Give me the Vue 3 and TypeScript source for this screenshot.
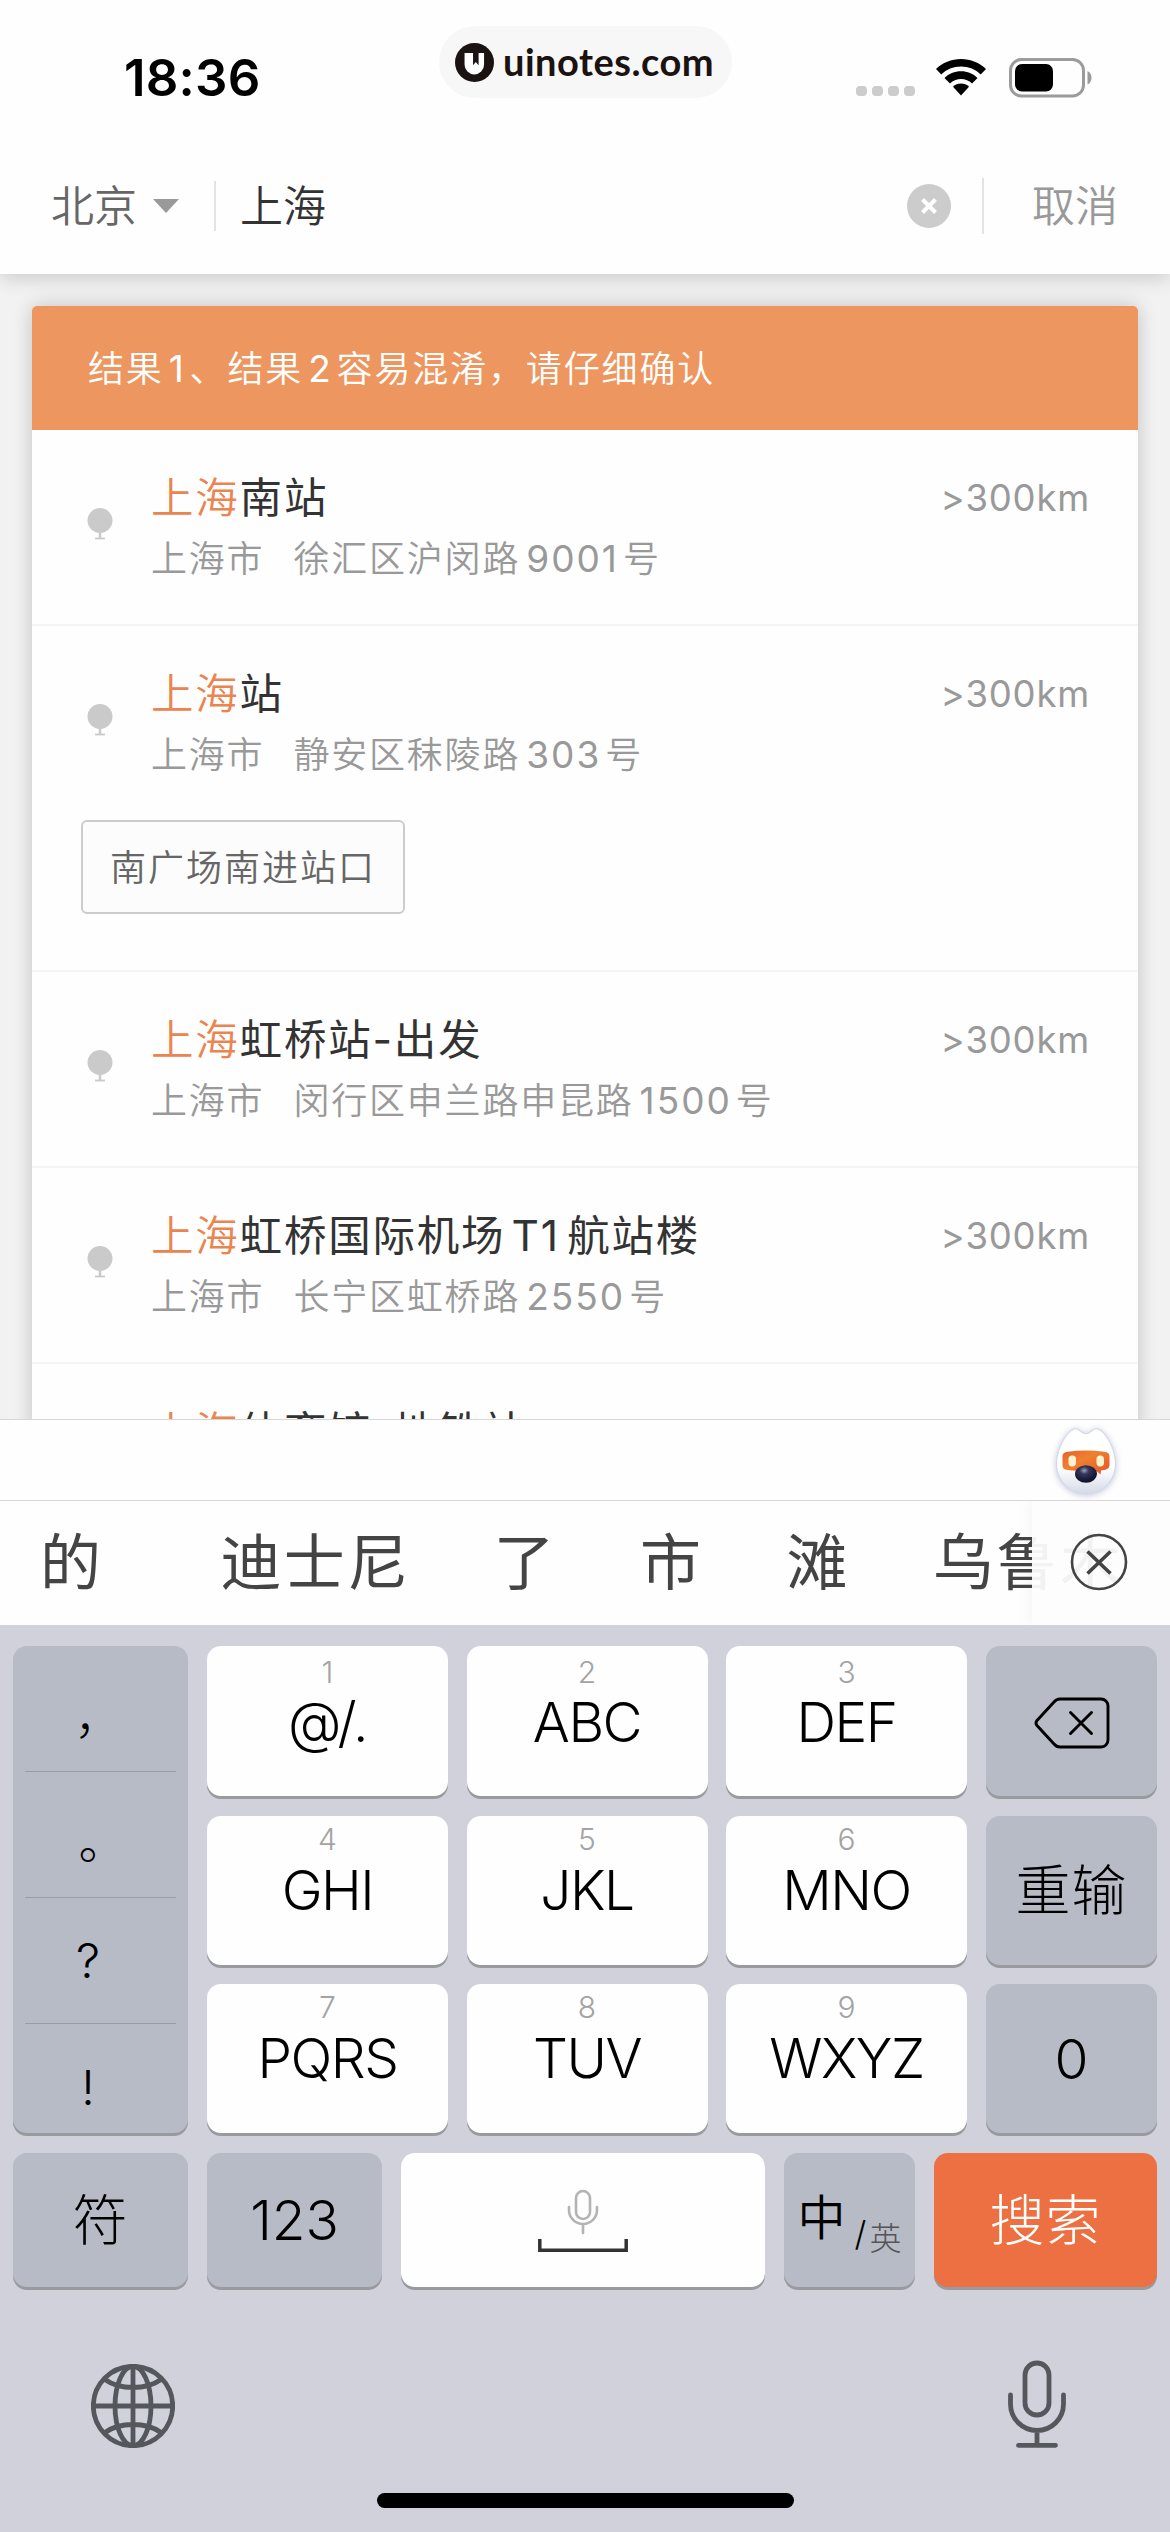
<script setup lang="ts">
interface Place {
  match: string
  rest: string
  city?: string
  address?: string
  distance?: string
  tag?: string
}

interface LetterKey {
  digit: string
  label: string
}

const places: Place[] = [
  { match: '上海', rest: '南站', city: '上海市', address: '徐汇区沪闵路9001号', distance: '>300km' },
  { match: '上海', rest: '站', city: '上海市', address: '静安区秣陵路303号', distance: '>300km', tag: '南广场南进站口' },
  { match: '上海', rest: '虹桥站-出发', city: '上海市', address: '闵行区申兰路申昆路1500号', distance: '>300km' },
  { match: '上海', rest: '虹桥国际机场T1航站楼', city: '上海市', address: '长宁区虹桥路2550号', distance: '>300km' },
  { match: '上海', rest: '体育馆-地铁站' },
]

const punctuation: string[] = ['，', '。', '?', '!']

const letterRows: LetterKey[][] = [
  [{ digit: '1', label: '@/.' }, { digit: '2', label: 'ABC' }, { digit: '3', label: 'DEF' }],
  [{ digit: '4', label: 'GHI' }, { digit: '5', label: 'JKL' }, { digit: '6', label: 'MNO' }],
  [{ digit: '7', label: 'PQRS' }, { digit: '8', label: 'TUV' }, { digit: '9', label: 'WXYZ' }],
]

const candidates: string[] = ['的', '迪士尼', '了', '市', '滩', '乌鲁木']

// Splits an address so that digit runs can carry their own side spacing.
const splitDigits = (text: string): string[] => text.split(/([A-Z]?\d+)/).filter(Boolean)
const isLatin = (part: string): boolean => /^[A-Z]?\d/.test(part)
</script>

<template>
  <div class="screen">
    <header class="top">
      <div class="status">
        <span class="time">18:36</span>
        <div class="brand">
          <svg class="brand-logo" viewBox="0 0 40 40">
            <circle cx="20" cy="20" r="20" fill="#1a1311" />
            <path d="M9.800 10.300h8.700v12.400l2.800-3.200 2.900 3.200V10.300h5.600v11.900a10 10 0 0 1-20 0z" fill="#fff" />
          </svg>
          <span class="brand-name">uinotes.com</span>
        </div>
        <div class="indicators">
          <div class="dots"><i v-for="n in 4" :key="n"></i></div>
          <svg class="wifi" viewBox="0 0 50 37">
            <path d="M25 0C34.700 0 43.500 3.800 50 10l-5.300 5.400C39.600 10.500 32.700 7.500 25 7.500S10.400 10.500 5.300 15.400L0 10C6.500 3.800 15.300 0 25 0z" />
            <path d="M25 12.300c6.400 0 12.200 2.500 16.500 6.600l-5.500 5.500C33.100 21.600 29.200 19.900 25 19.900s-8.100 1.700-11 4.500l-5.500-5.500C12.800 14.800 18.600 12.300 25 12.300z" />
            <path d="M25 24.500c3.100 0 5.900 1.200 8 3.200L25 36.500l-8-8.800c2.100-2 4.900-3.200 8-3.200z" />
          </svg>
          <svg class="battery" viewBox="0 0 84 40">
            <rect x="1.500" y="1.500" width="73" height="36.500" rx="11" fill="none" stroke="#9b9b9b" stroke-width="3" />
            <rect x="6" y="6" width="38" height="27.500" rx="7" />
            <path d="M78.500 13c2.600 1.200 4 3.800 4 6.800s-1.400 5.600-4 6.800z" fill="#9b9b9b" />
          </svg>
        </div>
      </div>
      <div class="search">
        <span class="city">北京</span>
        <svg class="caret" viewBox="0 0 26 14"><path d="M0 0h26L13 14z" fill="#999" /></svg>
        <i class="rule"></i>
        <span class="query">上海</span>
        <svg class="clear" viewBox="0 0 44 44">
          <circle cx="22" cy="22" r="22" fill="#ccc" />
          <path d="M15.500 15.500l13 13M28.500 15.500l-13 13" stroke="#fff" stroke-width="4" />
        </svg>
        <i class="rule tall"></i>
        <span class="cancel">取消</span>
      </div>
    </header>

    <main class="results">
      <div class="card">
        <p class="banner">结果<b>1</b>、结果<b>2</b>容易混淆，请仔细确认</p>
        <article v-for="(place, i) in places" :key="i" class="place">
          <div class="place-row">
            <svg class="pin" viewBox="0 0 26 32">
              <circle cx="13" cy="12.500" r="12.500" fill="#cacaca" />
              <path d="M13 24v6" stroke="#cacaca" stroke-width="2.500" />
              <path d="M8 30.500h10" stroke="#cacaca" stroke-width="1.800" />
            </svg>
            <div class="place-text">
              <h2>
                <em>{{ place.match }}</em><template v-for="(part, j) in splitDigits(place.rest)" :key="j"><span :class="{ latin: isLatin(part) }">{{ part }}</span></template>
              </h2>
              <div v-if="place.address" class="address">
                <span class="region">{{ place.city }}</span>
                <span><template v-for="(part, j) in splitDigits(place.address)" :key="j"><span :class="{ latin: isLatin(part) }">{{ part }}</span></template></span>
              </div>
            </div>
            <span v-if="place.distance" class="distance">{{ place.distance }}</span>
          </div>
          <div v-if="place.tag" class="tag">{{ place.tag }}</div>
        </article>
      </div>
    </main>

    <div class="accessory">
      <svg class="mascot" viewBox="0 0 72 78">
        <defs>
          <linearGradient id="face" x1="0" y1="0" x2="0" y2="1">
            <stop offset="0.600" stop-color="#fff" />
            <stop offset="1" stop-color="#d3d9e8" />
          </linearGradient>
          <linearGradient id="visor" x1="0" y1="0" x2="1" y2="1">
            <stop offset="0" stop-color="#e2622b" />
            <stop offset="0.400" stop-color="#f08030" />
            <stop offset="1" stop-color="#e2552a" />
          </linearGradient>
          <radialGradient id="nose" cx="0.420" cy="0.300" r="0.600">
            <stop offset="0" stop-color="#9ba0b8" />
            <stop offset="0.350" stop-color="#33365a" />
            <stop offset="1" stop-color="#15152f" />
          </radialGradient>
        </defs>
        <path class="mascot-face" d="M24 6c2.500-1 4.300.1 6.300 2.100 3.600 3.200 7.800 3.200 11.400 0C43.700 6.100 45.500 5 48 6c8 3.200 17.500 20 17.500 35C65.500 58 52.500 71 36 71S6.500 58 6.500 41C6.500 26 16 9.200 24 6z" fill="url(#face)" stroke="#d5d8e8" stroke-width="1.200" />
        <path d="M18 28.800c12-1.600 24-1.600 36 0 4 .6 5.500 2 5.500 5v8c0 3-1.500 4.500-5.500 5.200l-3 .5-.5 4-4-3.500c-7 .6-18 .4-28.500-.9-4-.6-5.500-2-5.500-5v-8.300c0-3 1.500-4.500 5.500-5z" fill="url(#visor)" />
        <rect x="18.500" y="32.500" width="7.500" height="11" rx="3.700" fill="#fff3cf" />
        <rect x="46.500" y="32.500" width="7.500" height="11" rx="3.700" fill="#fff3cf" />
        <ellipse cx="36" cy="51" rx="11" ry="8.700" fill="url(#nose)" />
      </svg>
    </div>

    <div class="candidates">
      <span v-for="word in candidates" :key="word" class="word">{{ word }}</span>
      <div class="dismiss">
        <svg viewBox="0 0 58 58">
          <circle cx="29" cy="29" r="27" />
          <path d="M17.500 18.500l23 22M40.500 18.500l-23 22" stroke-width="3.600" />
        </svg>
      </div>
    </div>

    <section class="keyboard">
      <div class="pad">
        <div class="key gray marks">
          <span v-for="mark in punctuation" :key="mark" class="mark">{{ mark }}</span>
        </div>
        <div class="letters">
          <template v-for="(row, r) in letterRows" :key="r">
            <div v-for="item in row" :key="item.digit" class="key letter" :class="{ first: r === 0 }">
              <small>{{ item.digit }}</small>
              <span>{{ item.label }}</span>
            </div>
          </template>
        </div>
        <div class="actions">
          <div class="key gray">
            <svg class="backspace" viewBox="0 0 76 52">
              <path d="M26 2h41a7 7 0 0 1 7 7v34a7 7 0 0 1-7 7H26q-3.500 0-6-3L3 28.500q-2-2.500 0-5L20 5q2.500-3 6-3z" />
              <path d="M36.500 15.500l21 21M57.500 15.500l-21 21" />
            </svg>
          </div>
          <div class="key gray han">重输</div>
          <div class="key gray">0</div>
        </div>
      </div>
      <div class="bottom">
        <div class="key gray han w-side">符</div>
        <div class="key gray w-side">123</div>
        <div class="key space">
          <svg viewBox="0 0 90 64">
            <rect x="38" y="2" width="14" height="28" rx="7" fill="none" stroke="#b3b3b3" stroke-width="2.600" />
            <path d="M31 18v3a14 14 0 0 0 28 0v-3M45 35v9" fill="none" stroke="#b3b3b3" stroke-width="2.600" stroke-linecap="round" />
            <path d="M1.800 50v11.200h86.400V50" fill="none" stroke="#333" stroke-width="3.500" />
          </svg>
        </div>
        <div class="key gray lang"><span class="zh">中</span><span class="slash">/</span><span class="en">英</span></div>
        <div class="key go han">搜索</div>
      </div>
      <div class="system">
        <svg class="globe" viewBox="0 0 84 84">
          <circle cx="42" cy="42" r="39.700" />
          <ellipse cx="42" cy="42" rx="18" ry="39.700" />
          <path d="M42 2v80M2 42h80M14 15.500Q25 23.500 42 23.500T70 15.500M14 68.500Q25 60.500 42 60.500T70 68.500" />
        </svg>
        <svg class="mic" viewBox="0 0 58 88">
          <rect x="17" y="3" width="24" height="52" rx="12" />
          <path d="M2.500 35v9a26.500 26.500 0 0 0 53 0v-9M29 71v14M10.500 85.300h37" />
        </svg>
      </div>
      <i class="home"></i>
    </section>
  </div>
</template>

<style>
body {
  margin: 0;
}
</style>

<style scoped>
.screen {
  width: 1170px;
  height: 2532px;
  display: flex;
  flex-direction: column;
  overflow: hidden;
  background: #f2f2f2;
  font-family: Inter, "Noto Sans CJK SC", sans-serif;
  font-weight: 350;
}

svg {
  display: block;
  flex: none;
}

.top {
  height: 274px;
  flex: none;
  position: relative;
  z-index: 2;
  background: #fefefe;
  box-shadow: 0 2px 20px rgba(0, 0, 0, 0.2);
}

.status {
  height: 138px;
  display: flex;
  align-items: flex-start;
}

.time {
  width: 439px;
  flex: none;
  padding: 47px 0 0 124px;
  font-size: 51px;
  line-height: 62px;
  font-weight: 600;
  letter-spacing: 0.200px;
  box-sizing: border-box;
}

.brand {
  width: 293px;
  height: 72px;
  flex: none;
  margin-top: 26px;
  padding-left: 16px;
  box-sizing: border-box;
  display: flex;
  align-items: center;
  gap: 9px;
  border-radius: 36px;
  background: #f7f7f7;
}

.brand-logo {
  width: 39px;
  height: 39px;
}

.brand-name {
  font-family: Lato, sans-serif;
  font-weight: 700;
  font-size: 38px;
  line-height: 46px;
  letter-spacing: 0.500px;
  margin-bottom: 2px;
  color: #1a1311;
}

.indicators {
  margin: 58px 0 0 124px;
  display: flex;
  align-items: flex-start;
}

.dots {
  display: flex;
  gap: 5px;
  margin-top: 28px;
}

.dots i {
  width: 11px;
  height: 10px;
  border-radius: 4px;
  background: #ccc;
}

.wifi {
  width: 50px;
  height: 37px;
  margin: 1px 0 0 21px;
}

.battery {
  width: 84px;
  height: 40px;
  margin-left: 23px;
}

.search {
  height: 136px;
  display: flex;
  align-items: center;
  font-size: 43px;
  color: #666;
}

.city {
  width: 102px;
  padding: 0 0 6px 51px;
}

.caret {
  width: 26px;
  height: 14px;
}

.rule {
  width: 2px;
  height: 50px;
  margin-left: 35px;
  background: #e3e3e3;
}

.query {
  margin-left: 24px;
  padding-bottom: 6px;
  color: #333;
}

.clear {
  width: 44px;
  height: 44px;
  margin-left: auto;
}

.rule.tall {
  height: 56px;
  margin-left: 31px;
}

.cancel {
  width: 138px;
  margin-left: 48px;
  padding-bottom: 6px;
  color: #999;
}

.results {
  height: 1145px;
  flex: none;
  padding: 32px 32px 0;
  box-sizing: border-box;
  overflow: hidden;
}

.card {
  min-height: 1200px;
  border-radius: 5px;
  background: #fefefe;
  box-shadow: 0 0 20px rgba(0, 0, 0, 0.2);
}

.banner {
  height: 124px;
  margin: 0;
  padding-left: 56px;
  box-sizing: border-box;
  border-radius: 5px 5px 0 0;
  background: #ed965f;
  color: #fff;
  font-size: 36px;
  line-height: 126px;
  letter-spacing: 1.850px;
}

.banner b {
  font-weight: 400;
  font-size: 37px;
  margin: 0 4px 0 5px;
}

.place {
  border-bottom: 2px solid #f4f4f4;
}

.place-row {
  height: 194px;
  display: flex;
  align-items: flex-start;
}

.pin {
  width: 26px;
  height: 32px;
  margin: 78px 38px 0 55px;
}

.place-text {
  flex: 1;
}

.place h2 {
  margin: 37px 0 0;
  font-size: 42.500px;
  line-height: 62px;
  font-weight: 400;
  letter-spacing: 1.800px;
  color: #333;
  white-space: nowrap;
}

.place em {
  font-style: normal;
  font-weight: 350;
  color: #ea8450;
}

.address {
  display: flex;
  gap: 29px;
  font-size: 36px;
  line-height: 60px;
  letter-spacing: 1.8px;
  color: #999;
  white-space: nowrap;
}

.latin {
  margin: 0 4px 0 6px;
  letter-spacing: 2px;
}

.address .latin {
  font-size: 37px;
  font-weight: 400;
}

.place h2 .latin {
  margin: 0 7px 0 6px;
}

.distance {
  margin: 38px 48px 0 0;
  font-size: 36.500px;
  line-height: 60px;
  font-weight: 400;
  letter-spacing: 0.800px;
  color: #999;
}

.tag {
  width: 324px;
  height: 94px;
  margin: 0 0 56px 49px;
  box-sizing: border-box;
  border: 2px solid #ccc;
  border-radius: 6px;
  background: #fcfcfc;
  color: #666;
  font-size: 36px;
  line-height: 92px;
  letter-spacing: 2px;
  text-indent: 27px;
}

.accessory {
  height: 81px;
  flex: none;
  box-sizing: border-box;
  border-top: 1.500px solid #d6d6d6;
  display: flex;
  justify-content: flex-end;
  background: #fefefe;
}

.mascot {
  width: 72px;
  height: 78px;
  margin: 3px 48px 0 0;
  overflow: visible;
}

.mascot-face {
  filter: drop-shadow(0 1px 3px rgba(110, 120, 170, 0.4));
}

.candidates {
  height: 125px;
  flex: none;
  position: relative;
  box-sizing: border-box;
  border-top: 1.500px solid #d6d6d6;
  overflow: hidden;
  display: flex;
  align-items: center;
  gap: 83px;
  padding-left: 40px;
  background: #fefefe;
  color: #444;
  font-size: 61px;
  font-weight: 400;
  letter-spacing: 2.400px;
}

.word {
  white-space: nowrap;
  padding-bottom: 10px;
}

.word:first-child {
  margin-right: 34px;
}

/* Pinned over the scrolled words, which stay faintly visible beneath it. */
.dismiss {
  position: absolute;
  top: 0;
  right: 0;
  width: 138px;
  height: 100%;
  box-sizing: border-box;
  padding-left: 38px;
  display: flex;
  align-items: center;
  background: rgba(253, 253, 253, 0.94);
  box-shadow: 0 0 16px rgba(0, 0, 0, 0.06);
}

.dismiss svg {
  width: 58px;
  height: 58px;
  margin-bottom: 2px;
  fill: none;
  stroke: #444;
  stroke-width: 2.600;
}

.keyboard {
  height: 907px;
  flex: none;
  padding: 21px 13px 0;
  box-sizing: border-box;
  display: flex;
  flex-direction: column;
  background: #d0d1da;
  color: #000;
  font-weight: 300;
}

.pad {
  height: 487px;
  display: flex;
  gap: 19px;
}

.key {
  display: flex;
  align-items: center;
  justify-content: center;
  border-radius: 14px;
  background: #fefefe;
  box-shadow: 0 3px 0 #989a9d;
  font-size: 55px;
}

.key.gray {
  background: #b7bbc5;
}

.key.han {
  padding-bottom: 9px;
  box-sizing: border-box;
  letter-spacing: 1px;
}

.marks {
  width: 175px;
  flex-direction: column;
  justify-content: flex-start;
  overflow: hidden;
}

.mark {
  width: 151px;
  height: 126px;
  flex: none;
  box-sizing: border-box;
  border-bottom: 1.500px solid #999ca3;
  display: flex;
  align-items: center;
  justify-content: center;
  padding-right: 25px;
  font-size: 48px;
}

.mark:last-child {
  border-bottom: 0;
}

.mark:nth-child(1) {
  padding: 8px 4px 0 0;
}

.mark:nth-child(2) {
  padding: 6px 0 0 4px;
}

.letters {
  flex: 1;
  display: grid;
  grid-template-columns: repeat(3, 241px);
  grid-template-rows: 150px 149px 149px;
  column-gap: 18.500px;
  row-gap: 19.500px;
}

.letter {
  flex-direction: column;
  justify-content: flex-start;
}

.letter small {
  margin-top: 6px;
  font-size: 30px;
  line-height: 34px;
  color: #a3a3a3;
}

.letter.first small {
  margin-top: 9px;
}

.letter span {
  margin-top: 2px;
  line-height: 64px;
  letter-spacing: -1.500px;
}

.letter.first span {
  margin-top: 1px;
}

.actions {
  width: 171px;
  display: grid;
  grid-template-rows: 150px 149px 149px;
  row-gap: 19.500px;
}

.backspace {
  width: 76px;
  height: 52px;
  margin-top: 4px;
  fill: none;
  stroke: #000;
  stroke-width: 2.900;
  stroke-linecap: round;
  stroke-linejoin: round;
}

.bottom {
  height: 134px;
  margin-top: 20px;
  display: flex;
  gap: 19px;
}

.w-side {
  width: 175px;
}

.space {
  width: 364px;
}

.space svg {
  width: 90px;
  height: 64px;
  margin-top: 2px;
}

.lang {
  width: 131px;
}

.zh {
  font-size: 48px;
  font-weight: 350;
  margin-bottom: 12px;
}

.slash {
  font-size: 34px;
  margin: 27px 3px 0 9px;
}

.en {
  font-size: 32px;
  margin-top: 32px;
  color: #555;
}

.key.go {
  flex: 1;
  background: #ec7041;
  color: #fff;
}

.system {
  flex: 1;
  display: flex;
  justify-content: space-between;
  align-items: flex-start;
  padding: 73px 91px 0 78px;
  fill: none;
  stroke: #54585c;
  stroke-width: 4.800;
  stroke-linecap: round;
}

.globe {
  width: 84px;
  height: 84px;
  margin-top: 4px;
}

.mic {
  width: 58px;
  height: 88px;
}

.home {
  width: 417px;
  height: 15px;
  margin: 0 auto 24px;
  border-radius: 8px;
  background: #000;
}
</style>
